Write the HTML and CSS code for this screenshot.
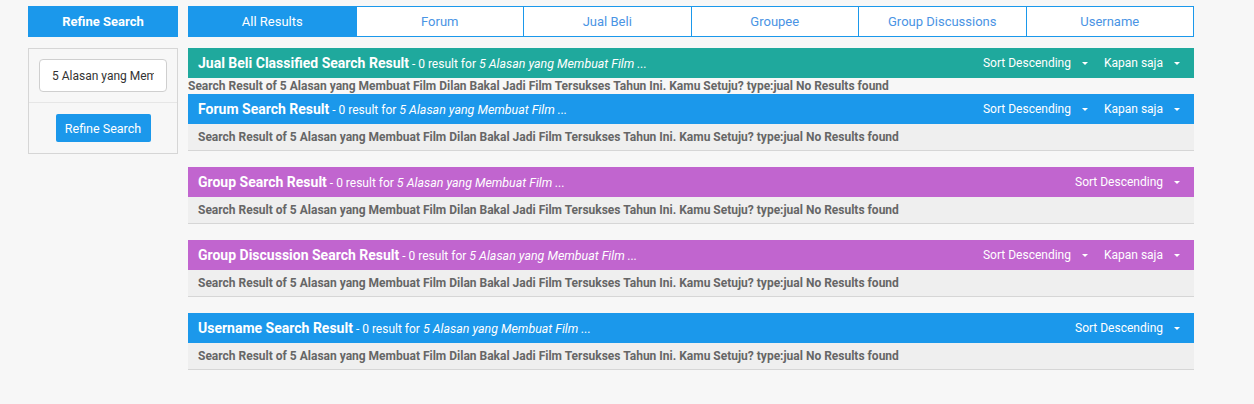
FILE: index.html
```html
<!DOCTYPE html>
<html lang="en">

<head>
    <meta charset="UTF-8">
    <meta name="viewport" content="width=device-width, initial-scale=1.0">
    <title>Search Result</title>
    <link rel="stylesheet" href="styles.css">
</head>

<body>
    <div class="page">
        <!-- Sidebar -->
        <aside class="sidebar">
            <div class="sidebar-title">Refine Search</div>
            <div class="refine-box">
                <div class="refine-input">
                    <input type="text" value="5 Alasan yang Membuat Film Dilan Bakal Jadi Film Tersukses Tahun Ini">
                </div>
                <div class="refine-action">
                    <button class="refine-btn">Refine Search</button>
                </div>
            </div>
        </aside>

        <!-- Main results -->
        <main class="results">
            <nav class="tabs">
                <a class="tab active">All Results</a>
                <a class="tab">Forum</a>
                <a class="tab">Jual Beli</a>
                <a class="tab">Groupee</a>
                <a class="tab">Group Discussions</a>
                <a class="tab">Username</a>
            </nav>

            <section class="result-block plain">
                <div class="result-head teal">
                    <div class="result-title"><b>Jual Beli Classified Search Result</b> - 0 result for <i>5 Alasan yang Membuat Film ...</i></div>
                    <div class="result-filters">
                        <span class="dropdown">Sort Descending<span class="caret"></span></span>
                        <span class="dropdown">Kapan saja<span class="caret"></span></span>
                    </div>
                </div>
                <div class="result-note">Search Result of 5 Alasan yang Membuat Film Dilan Bakal Jadi Film Tersukses Tahun Ini. Kamu Setuju? type:jual No Results found</div>
            </section>

            <section class="result-block">
                <div class="result-head blue">
                    <div class="result-title"><b>Forum Search Result</b> - 0 result for <i>5 Alasan yang Membuat Film ...</i></div>
                    <div class="result-filters">
                        <span class="dropdown">Sort Descending<span class="caret"></span></span>
                        <span class="dropdown">Kapan saja<span class="caret"></span></span>
                    </div>
                </div>
                <div class="result-body">Search Result of 5 Alasan yang Membuat Film Dilan Bakal Jadi Film Tersukses Tahun Ini. Kamu Setuju? type:jual No Results found</div>
            </section>

            <section class="result-block">
                <div class="result-head purple">
                    <div class="result-title"><b>Group Search Result</b> - 0 result for <i>5 Alasan yang Membuat Film ...</i></div>
                    <div class="result-filters">
                        <span class="dropdown">Sort Descending<span class="caret"></span></span>
                    </div>
                </div>
                <div class="result-body">Search Result of 5 Alasan yang Membuat Film Dilan Bakal Jadi Film Tersukses Tahun Ini. Kamu Setuju? type:jual No Results found</div>
            </section>

            <section class="result-block">
                <div class="result-head purple">
                    <div class="result-title"><b>Group Discussion Search Result</b> - 0 result for <i>5 Alasan yang Membuat Film ...</i></div>
                    <div class="result-filters">
                        <span class="dropdown">Sort Descending<span class="caret"></span></span>
                        <span class="dropdown">Kapan saja<span class="caret"></span></span>
                    </div>
                </div>
                <div class="result-body">Search Result of 5 Alasan yang Membuat Film Dilan Bakal Jadi Film Tersukses Tahun Ini. Kamu Setuju? type:jual No Results found</div>
            </section>

            <section class="result-block">
                <div class="result-head blue">
                    <div class="result-title"><b>Username Search Result</b> - 0 result for <i>5 Alasan yang Membuat Film ...</i></div>
                    <div class="result-filters">
                        <span class="dropdown">Sort Descending<span class="caret"></span></span>
                    </div>
                </div>
                <div class="result-body">Search Result of 5 Alasan yang Membuat Film Dilan Bakal Jadi Film Tersukses Tahun Ini. Kamu Setuju? type:jual No Results found</div>
            </section>
        </main>
    </div>
</body>

</html>
```

FILE: styles.css
```css
body {
    margin: 0;
    background-color: #f7f7f7;
    font-family: Roboto, "Liberation Sans", Arial, sans-serif;
    font-size: 12px;
    color: #333;
}

.page {
    display: flex;
    align-items: flex-start;
    gap: 10px;
    padding: 6px 0 0 28px;
}

/* Sidebar */
.sidebar {
    width: 150px;
    flex-shrink: 0;
}

.sidebar-title {
    height: 31px;
    line-height: 31px;
    background-color: #1b98eb;
    color: white;
    font-weight: bold;
    font-size: 13px;
    text-align: center;
    margin-bottom: 11px;
}

.refine-box {
    border: 1px solid #d6d6d6;
}

.refine-input {
    padding: 10px;
    border-bottom: 1px solid #e6e6e6;
}

.refine-input input {
    box-sizing: border-box;
    width: 100%;
    height: 33px;
    padding: 0 12px;
    border: 1px solid #cfcfcf;
    border-radius: 4px;
    background: white;
    font-family: inherit;
    font-size: 12px;
    color: #333;
}

.refine-action {
    padding: 11px 0 11px;
    text-align: center;
}

.refine-btn {
    display: inline-block;
    vertical-align: top;
    width: 95px;
    height: 28px;
    border: none;
    border-radius: 2px;
    background-color: #1b98eb;
    color: white;
    font-family: inherit;
    font-size: 12.5px;
    cursor: pointer;
}

/* Tabs */
.results {
    width: 1006px;
}

.tabs {
    display: flex;
    margin-bottom: 11px;
}

.tab {
    flex: 1;
    height: 29px;
    line-height: 29px;
    border: 1px solid #1b98eb;
    margin-left: -1px;
    background: white;
    color: #4a94e4;
    font-size: 13px;
    text-align: center;
    cursor: pointer;
}

.tab:first-child {
    margin-left: 0;
}

.tab.active {
    background-color: #1b98eb;
    color: white;
}

/* Result sections */
.result-block {
    margin-bottom: 16px;
}

.result-block.plain {
    margin-bottom: 0;
}

.result-head {
    display: flex;
    justify-content: space-between;
    align-items: center;
    height: 30px;
    padding: 0 14px 0 10px;
    color: white;
}

.result-head.teal {
    background-color: #1fa99d;
}

.result-head.blue {
    background-color: #1b98eb;
}

.result-head.purple {
    background-color: #c165cf;
}

.result-title b {
    font-size: 14px;
}

.result-title i {
    font-size: 12.4px;
}

.result-filters {
    display: flex;
    gap: 16px;
}

.dropdown {
    display: flex;
    align-items: center;
}

.caret {
    display: inline-block;
    width: 0;
    height: 0;
    margin-left: 11px;
    border-left: 3.5px solid transparent;
    border-right: 3.5px solid transparent;
    border-top: 3.5px solid white;
}

.result-note {
    height: 16px;
    line-height: 16px;
    font-weight: bold;
    color: #666;
}

.result-body {
    height: 26px;
    line-height: 26px;
    padding: 0 10px;
    background-color: #efefef;
    border-bottom: 1px solid #d6d6d6;
    font-weight: bold;
    color: #666;
}
```
